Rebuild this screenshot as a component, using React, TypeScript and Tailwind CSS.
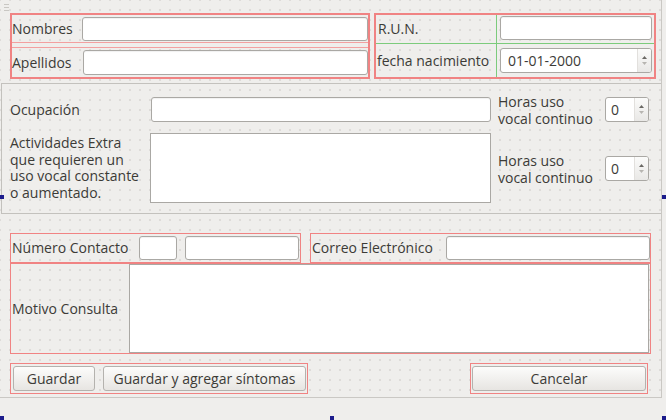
import { ReactNode } from "react";

const red = "border-[#f08383]";

function Field({ className = "" }: { className?: string }) {
  return (
    <div
      className={`shrink-0 bg-white border border-[#aaa8a4] rounded-[3px] shadow-[inset_0_1px_1px_rgba(0,0,0,0.06)] ${className}`}
    />
  );
}

function TextArea({ className = "" }: { className?: string }) {
  return <div className={`shrink-0 bg-white border border-[#aaa8a4] ${className}`} />;
}

function Spin({ value, className = "" }: { value: string; className?: string }) {
  return (
    <div
      className={`shrink-0 flex bg-white border border-[#aaa8a4] rounded-[3px] overflow-hidden ${className}`}
    >
      <span className="flex-1 pl-[5px] flex items-center">{value}</span>
      <span className="w-[14px] flex flex-col items-center justify-center gap-[3px] bg-gradient-to-b from-[#fbfbfa] to-[#e9e8e6] border-l border-[#e2e0dd]">
        <svg width="5" height="3" viewBox="0 0 5 3">
          <path d="M0 3 L2.5 0 L5 3 Z" fill="#6a6864" />
        </svg>
        <svg width="5" height="3" viewBox="0 0 5 3">
          <path d="M0 0 L2.5 3 L5 0 Z" fill="#b7b5b1" />
        </svg>
      </span>
    </div>
  );
}

function Button({ children, className = "" }: { children: ReactNode; className?: string }) {
  return (
    <div
      className={`shrink-0 h-[25px] flex items-center justify-center rounded-[3px] border border-[#b4b2ae] bg-gradient-to-b from-[#fcfcfb] to-[#e7e5e2] ${className}`}
    >
      {children}
    </div>
  );
}

function Handle({ className }: { className: string }) {
  return <div className={`absolute w-[4px] h-[4px] bg-[#1c1c8c] ${className}`} />;
}

export default function App() {
  return (
    <div className="relative w-[666px] h-[420px] overflow-hidden bg-[#efeeec] text-[14px] leading-[16px] text-[#3c3b37] font-['Open_Sans',sans-serif]">
      <div className="relative w-[662px] h-[398px] overflow-hidden border-r border-b border-[#cac8c4] bg-[radial-gradient(circle,#d8d6d2_0.6px,transparent_1px)] bg-[length:10px_10px] bg-[position:5px_5px]">
        {/* grip */}
        <div className="absolute left-[4px] top-[4px] flex flex-col gap-[2px]">
          <span className="block w-[5px] h-px bg-[#c9c7c3]" />
          <span className="block w-[5px] h-px bg-[#c9c7c3]" />
          <span className="block w-[5px] h-px bg-[#c9c7c3]" />
        </div>

        {/* top groups */}
        <div className="flex gap-[4px] pl-[10px] pt-[13px]">
          <div className={`shrink-0 w-[360px] h-[66px] border-2 ${red} flex flex-col justify-between`}>
            <div className="h-[28px] border-b border-[#f3a0a0] flex items-center">
              <span className="w-[70px]">Nombres</span>
              <Field className="w-[286px] h-[24px]" />
            </div>
            <div className="h-[30px] border-t border-[#f3a0a0] flex items-center">
              <span className="w-[71px]">Apellidos</span>
              <Field className="w-[285px] h-[25px]" />
            </div>
          </div>

          <div className={`shrink-0 w-[282px] h-[66px] border-2 ${red} grid grid-cols-[121px_1fr] grid-rows-[29px_1fr]`}>
            <div className="border-r border-b border-[#7ccb7c] flex items-center pl-[2px]">R.U.N.</div>
            <div className="border-b border-[#7ccb7c] flex items-start pt-[1px] pl-[3px]">
              <Field className="w-[152px] h-[24px]" />
            </div>
            <div className="border-r border-[#7ccb7c] flex items-center pl-[1px] whitespace-nowrap">fecha nacimiento</div>
            <div className="flex items-center pl-[3px]">
              <Spin value="01-01-2000" className="w-[152px] h-[25px] pl-[2px]" />
            </div>
          </div>
        </div>

        {/* middle frame */}
        <div className="ml-[1px] mt-[4px] w-[661px] h-[131px] border border-[#c3c1bd] pl-[8px] pt-[13px] flex">
          <div className="flex flex-col gap-[11px]">
            <div className="flex items-center h-[25px]">
              <span className="w-[141px]">Ocupación</span>
              <Field className="w-[340px] h-[25px]" />
            </div>
            <div className="flex items-center">
              <span className="w-[140px] leading-[16.5px] whitespace-nowrap">
                Actividades Extra
                <br />
                que requieren un
                <br />
                uso vocal constante
                <br />o aumentado.
              </span>
              <TextArea className="w-[341px] h-[70px]" />
            </div>
          </div>
          <div className="ml-[7px] flex flex-col gap-[34px]">
            <div className="flex items-center h-[25px]">
              <span className="w-[107px] leading-[17px] whitespace-nowrap">
                Horas uso
                <br />
                vocal continuo
              </span>
              <Spin value="0" className="w-[44px] h-[25px]" />
            </div>
            <div className="flex items-center h-[25px]">
              <span className="w-[107px] leading-[17px] whitespace-nowrap">
                Horas uso
                <br />
                vocal continuo
              </span>
              <Spin value="0" className="w-[44px] h-[25px]" />
            </div>
          </div>
        </div>

        {/* contact */}
        <div className="mt-[19px] pl-[10px] flex gap-[9px]">
          <div className={`shrink-0 w-[291px] h-[30px] border ${red} flex items-center pl-[1px]`}>
            <span className="w-[127px] whitespace-nowrap">Número Contacto</span>
            <Field className="w-[38px] h-[24px]" />
            <Field className="ml-[8px] w-[114px] h-[24px]" />
          </div>
          <div className={`shrink-0 w-[341px] h-[30px] border ${red} flex items-center pl-[1px]`}>
            <span className="w-[134px] whitespace-nowrap">Correo Electrónico</span>
            <Field className="w-[204px] h-[24px]" />
          </div>
        </div>

        {/* motivo */}
        <div className="pl-[10px] flex">
          <div className={`shrink-0 w-[641px] h-[91px] border ${red} flex items-center pl-[1px]`}>
            <span className="w-[117px] whitespace-nowrap">Motivo Consulta</span>
            <TextArea className="w-[520px] h-[89px]" />
          </div>
        </div>

        {/* buttons */}
        <div className="mt-[9px] pl-[10px] flex">
          <div className={`shrink-0 w-[298px] h-[31px] border ${red} flex items-center gap-[8px] pl-[2px]`}>
            <Button className="w-[82px]">Guardar</Button>
            <Button className="w-[203px]">Guardar y agregar síntomas</Button>
          </div>
          <div className={`shrink-0 ml-[162px] w-[178px] h-[31px] border-[1.5px] ${red} flex items-center pl-[1px]`}>
            <Button className="w-[174px]">Cancelar</Button>
          </div>
        </div>
      </div>

      <Handle className="left-0 top-[195px]" />
      <Handle className="left-[662px] top-[195px]" />
      <Handle className="left-0 top-[416px]" />
      <Handle className="left-[330px] top-[416px]" />
      <Handle className="left-[662px] top-[416px]" />
    </div>
  );
}
